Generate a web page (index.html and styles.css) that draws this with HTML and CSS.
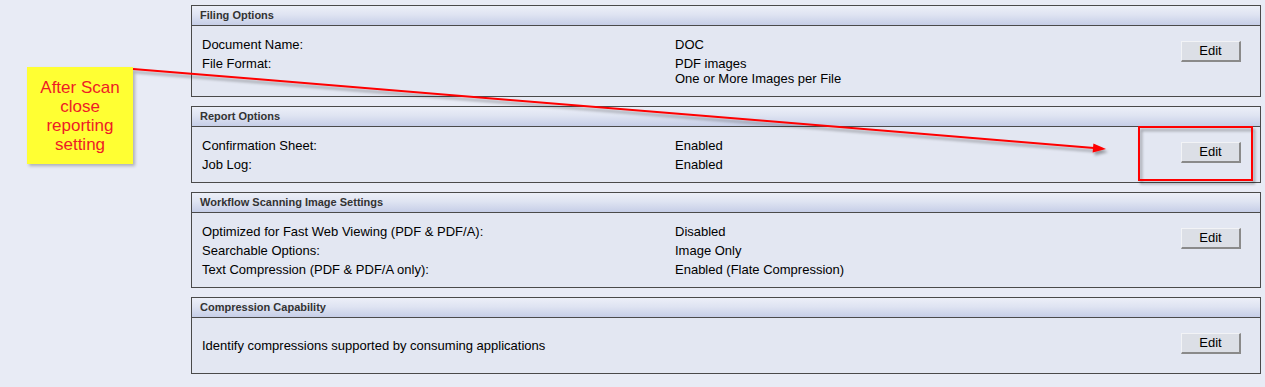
FILE: index.html
```html
<!DOCTYPE html>
<html>
<head>
<meta charset="utf-8">
<link rel="stylesheet" href="styles.css">
</head>
<body>
<div class="page">
  <div class="panel">
    <div class="panel-head">Filing Options</div>
    <div class="panel-body">
      <div class="rows">
        <div class="row"><div class="label">Document Name:</div><div class="value">DOC</div></div>
        <div class="row"><div class="label">File Format:</div><div class="value"><div>PDF images</div><div>One or More Images per File</div></div></div>
      </div>
      <div class="btn-cell"><button class="btn">Edit</button></div>
    </div>
  </div>
  <div class="panel">
    <div class="panel-head">Report Options</div>
    <div class="panel-body">
      <div class="rows">
        <div class="row"><div class="label">Confirmation Sheet:</div><div class="value">Enabled</div></div>
        <div class="row"><div class="label">Job Log:</div><div class="value">Enabled</div></div>
      </div>
      <div class="btn-cell"><button class="btn">Edit</button></div>
    </div>
  </div>
  <div class="panel">
    <div class="panel-head">Workflow Scanning Image Settings</div>
    <div class="panel-body">
      <div class="rows">
        <div class="row"><div class="label">Optimized for Fast Web Viewing (PDF &amp; PDF/A):</div><div class="value">Disabled</div></div>
        <div class="row"><div class="label">Searchable Options:</div><div class="value">Image Only</div></div>
        <div class="row"><div class="label">Text Compression (PDF &amp; PDF/A only):</div><div class="value">Enabled (Flate Compression)</div></div>
      </div>
      <div class="btn-cell"><button class="btn">Edit</button></div>
    </div>
  </div>
  <div class="panel">
    <div class="panel-head">Compression Capability</div>
    <div class="panel-body">
      <div class="rows">
        <div class="row row-tall"><div class="label wide">Identify compressions supported by consuming applications</div></div>
      </div>
      <div class="btn-cell"><button class="btn">Edit</button></div>
    </div>
  </div>
</div>

<div class="note">After Scan<br>close<br>reporting<br>setting</div>

<svg class="overlay" width="1265" height="387" viewBox="0 0 1265 387" xmlns="http://www.w3.org/2000/svg">
  <defs>
    <filter id="sh" x="-5%" y="-50%" width="110%" height="200%">
      <feGaussianBlur in="SourceAlpha" stdDeviation="1.5"/>
      <feOffset dx="2" dy="3" result="b"/>
      <feComponentTransfer><feFuncA type="linear" slope="0.35"/></feComponentTransfer>
      <feMerge><feMergeNode/><feMergeNode in="SourceGraphic"/></feMerge>
    </filter>
  </defs>
  <g filter="url(#sh)">
    <line x1="133" y1="69" x2="1094" y2="147.9" stroke="#ff0000" stroke-width="2"/>
    <polygon points="1106,149 1093.4,143.4 1092.6,152.4" fill="#ff0000"/>
    <rect x="1139" y="127" width="113" height="53" fill="none" stroke="#ff0000" stroke-width="2"/>
  </g>
</svg>
</body>
</html>
```
FILE: styles.css
```css
html, body {
  margin: 0;
  padding: 0;
  background: #e8ebf5;
}
body {
  font-family: "Liberation Sans", Arial, sans-serif;
  font-size: 13px;
  color: #000;
  width: 1265px;
  height: 387px;
  overflow: hidden;
  position: relative;
}
.page {
  padding-top: 5px;
  margin-left: 191px;
  width: 1070px;
  display: flex;
  flex-direction: column;
  gap: 9px;
}
.panel {
  border: 1px solid #4a4a4a;
  background: #e3e7f2;
}
.panel-head {
  height: 19px;
  line-height: 19px;
  border-bottom: 1px solid #4a4a4a;
  background: linear-gradient(to bottom, #eceff8 0%, #dfe4f2 45%, #c6cee7 100%);
  font-weight: bold;
  font-size: 11px;
  color: #333;
  padding-left: 8px;
}
.panel-body {
  display: flex;
  padding: 9px 19px 8px 10px;
}
.rows {
  flex: 1;
}
.row {
  display: flex;
  padding: 2px 0;
  line-height: 15px;
}
.row-tall {
  padding: 11px 0 12px;
}
.label {
  width: 473px;
  flex: none;
}
.label.wide {
  width: auto;
}
.value {
  flex: 1;
}
.btn-cell {
  padding-top: 6px;
}
.btn {
  width: 60px;
  height: 21px;
  margin: 0;
  padding: 0 0 1px;
  font-family: "Liberation Sans", Arial, sans-serif;
  font-size: 13px;
  color: #000;
  background: #dcdfe6;
  border-style: solid;
  border-width: 1px 2px 2px 1px;
  border-color: #f2f3f6 #8a8a8a #8a8a8a #f2f3f6;
  display: block;
}
.note {
  position: absolute;
  left: 27px;
  top: 67px;
  width: 106px;
  height: 97px;
  background: #ffff33;
  box-shadow: 2px 2px 3px rgba(0,0,0,0.25);
  color: #ee1c25;
  font-size: 17px;
  line-height: 19px;
  text-align: center;
  display: flex;
  align-items: center;
  justify-content: center;
}
.overlay {
  position: absolute;
  left: 0;
  top: 0;
  pointer-events: none;
}
```
